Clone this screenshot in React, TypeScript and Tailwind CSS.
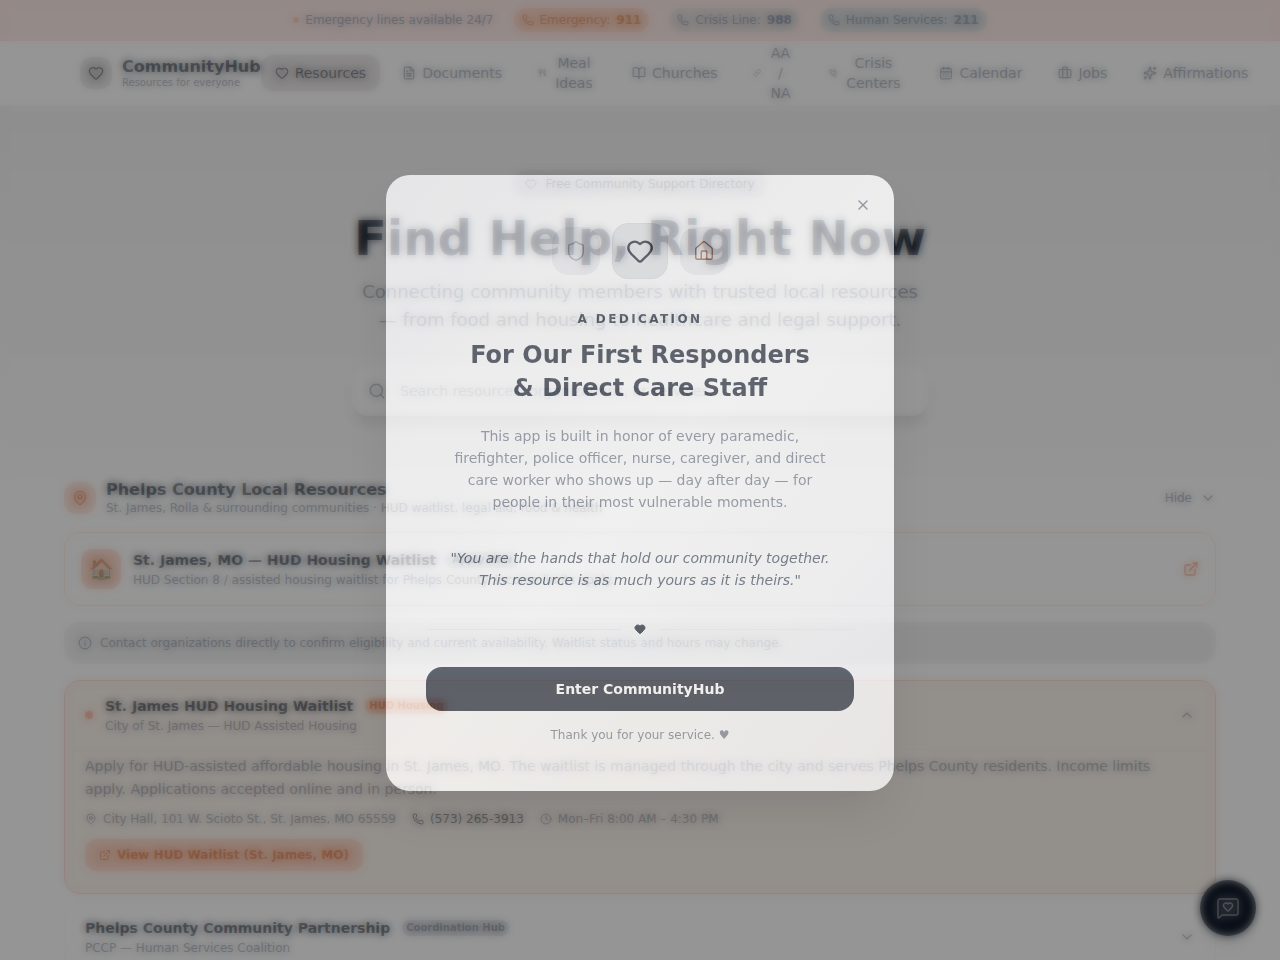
import { useState } from 'react'
import {
  BookOpen, Briefcase, CalendarDays, ChevronDown, ChevronUp, Clock, ExternalLink, FileText, Heart, House,
  Info, Link, MapPin, MessageSquareHeart, Phone, PhoneCall, Search, Shield, Sparkles, Utensils, X,
} from 'lucide-react'

const hotlines = [
  { label: 'Emergency:', number: '911', style: 'bg-[#fbd3c2] text-[#cf7434]' },
  { label: 'Crisis Line:', number: '988', style: 'bg-[#e8e0df] text-slate-500' },
  { label: 'Human Services:', number: '211', style: 'bg-[#dadcde] text-slate-500' },
]

const navItems = [
  { label: 'Resources', icon: Heart, iconStyle: 'w-3.5', active: true },
  { label: 'Documents', icon: FileText, iconStyle: 'w-3.5' },
  { label: 'Meal Ideas', icon: Utensils, iconStyle: 'w-2', labelStyle: 'w-11' },
  { label: 'Churches', icon: BookOpen, iconStyle: 'w-3.5' },
  { label: 'AA / NA', icon: Link, iconStyle: 'w-2', labelStyle: 'w-[26px]' },
  { label: 'Crisis Centers', icon: PhoneCall, iconStyle: 'w-2', labelStyle: 'w-[60px]' },
  { label: 'Calendar', icon: CalendarDays, iconStyle: 'w-3.5' },
  { label: 'Jobs', icon: Briefcase, iconStyle: 'w-3.5' },
  { label: 'Affirmations', icon: Sparkles, iconStyle: 'w-3.5' },
]

function EmergencyBar() {
  return (
    <div className="flex items-center justify-center gap-5 border-b border-[#fbdcd5] bg-[#fdebe8] py-2 text-xs text-slate-500">
      <span className="flex items-center gap-1.5">
        <span className="h-1.5 w-1.5 rounded-full bg-[#f5b196]" />
        Emergency lines available 24/7
      </span>
      {hotlines.map(h => (
        <a key={h.number} href={`tel:${h.number}`} className={`flex items-center gap-1.5 rounded-full px-2 py-1 ${h.style}`}>
          <Phone size={12} />
          <span>{h.label}</span>
          <span className="font-bold">{h.number}</span>
        </a>
      ))}
    </div>
  )
}

function Header() {
  return (
    <header className="border-b border-gray-100 bg-white">
      <div className="mx-auto flex h-16 max-w-6xl items-center px-4">
        <a href="#" className="flex shrink-0 items-center gap-2.5">
          <span className="flex h-8 w-8 items-center justify-center rounded-xl bg-[#e4e1e2]">
            <Heart size={16} className="text-gray-900" />
          </span>
          <span>
            <span className="block text-base leading-5 font-bold text-gray-900">CommunityHub</span>
            <span className="block text-[10px] leading-3 text-gray-500">Resources for everyone</span>
          </span>
        </a>
        <nav className="flex items-center gap-2">
          {navItems.map(item => (
            <a
              key={item.label}
              href="#"
              className={`flex shrink-0 items-center gap-1.5 rounded-xl px-3.5 py-2 text-center text-sm ${item.active ? 'bg-[#e8e4e5] text-gray-900' : 'text-gray-500'}`}
            >
              <item.icon size={14} className={`shrink-0 ${item.iconStyle}`} />
              <span className={item.labelStyle}>{item.label}</span>
            </a>
          ))}
        </nav>
      </div>
    </header>
  )
}

function Hero() {
  return (
    <section className="bg-linear-to-b from-[#f3f3f3] to-[#fdfdfd] px-4 py-16 text-center">
      <span className="inline-flex items-center gap-2 rounded-full bg-[#e4e4e6] px-3 py-1.5 text-xs text-gray-600">
        <Heart size={12} />
        Free Community Support Directory
      </span>
      <h1 className="mt-4 text-5xl leading-12 font-bold text-gray-900">Find Help, Right Now</h1>
      <p className="mx-auto mt-4 max-w-xl text-lg leading-7 text-gray-500">
        Connecting community members with trusted local resources — from food and housing to healthcare and legal support.
      </p>
      <label className="mx-auto mt-8 flex h-[50px] max-w-xl items-center gap-3.5 rounded-2xl bg-white px-4 shadow-lg">
        <Search size={18} className="text-gray-500" />
        <input
          type="text"
          aria-label="Search resources"
          placeholder="Search resources, organizations, or services..."
          className="flex-1 text-sm outline-none placeholder:text-gray-400"
        />
      </label>
    </section>
  )
}

function LocalResources() {
  const [open, setOpen] = useState(true)

  return (
    <section className="mx-auto max-w-6xl">
      <div className="flex items-center gap-2.5">
        <span className="flex h-8 w-8 items-center justify-center rounded-xl bg-[#fbe0d6] text-[#d9692a]">
          <MapPin size={16} />
        </span>
        <div className="flex-1">
          <h2 className="text-base leading-5 font-bold text-gray-900">Phelps County Local Resources</h2>
          <p className="text-xs text-gray-500">St. James, Rolla &amp; surrounding communities · HUD waitlist, legal aid, food &amp; health</p>
        </div>
        <button onClick={() => setOpen(!open)} className="flex items-center gap-2 text-xs text-gray-500">
          Hide <ChevronDown size={16} />
        </button>
      </div>

      <a href="#" className="mt-4 flex items-center gap-3 rounded-2xl border border-[#f7cfc4] bg-white p-4">
        <span className="flex h-10 w-10 items-center justify-center rounded-xl bg-[#fad6c8] text-xl">🏠</span>
        <span className="flex-1">
          <span className="flex items-center gap-2">
            <span className="text-sm font-bold text-gray-900">St. James, MO — HUD Housing Waitlist</span>
            <span className="rounded-full bg-gray-200 px-2 text-[10px] leading-4 font-bold text-gray-500">Apply Now</span>
          </span>
          <span className="mt-0.5 block text-xs text-gray-500">HUD Section 8 / assisted housing waitlist for Phelps County. Income limits apply.</span>
        </span>
        <ExternalLink size={16} className="text-[#e8764a]" />
      </a>

      <div className="mt-4 flex items-center gap-2 rounded-2xl bg-[#f1f1f2] px-3.5 py-[13px] text-xs text-gray-500">
        <Info size={14} />
        Contact organizations directly to confirm eligibility and current availability. Waitlist status and hours may change.
      </div>

      {open && (
        <article className="mt-4 rounded-2xl border border-[#f3b5a3] bg-[#fcf4ed]">
          <div className="flex items-center gap-3 px-5 py-[15px]">
            <span className="h-2 w-2 rounded-full bg-[#f59a80]" />
            <div className="flex-1">
              <div className="flex items-center gap-3">
                <h3 className="text-sm font-bold text-gray-900">St. James HUD Housing Waitlist</h3>
                <span className="rounded-full bg-[#fad0bf] px-1 text-[10px] leading-4 font-bold text-[#d9692a]">HUD Housing</span>
              </div>
              <p className="mt-0.5 text-xs text-gray-500">City of St. James — HUD Assisted Housing</p>
            </div>
            <button aria-label="Collapse" className="text-gray-500"><ChevronUp size={16} /></button>
          </div>
          <div className="border-t border-[#f7eee6] px-5 pt-[5px] pb-[22px]">
            <p className="text-sm leading-[23px] text-gray-500">
              Apply for HUD-assisted affordable housing in St. James, MO. The waitlist is managed through the city and serves Phelps County residents. Income limits apply. Applications accepted online and in person.
            </p>
            <div className="mt-2.5 flex items-center gap-4 text-xs text-gray-500">
              <span className="flex items-center gap-1.5"><MapPin size={12} />City Hall, 101 W. Scioto St., St. James, MO 65559</span>
              <a href="tel:5732653913" className="flex items-center gap-1.5 text-gray-900"><Phone size={12} />(573) 265-3913</a>
              <span className="flex items-center gap-1.5"><Clock size={12} />Mon–Fri 8:00 AM – 4:30 PM</span>
            </div>
            <a href="#" className="mt-3 inline-flex items-center gap-1.5 rounded-xl bg-[#fad3c4] px-3.5 py-2 text-xs font-bold text-[#d9692a]">
              <ExternalLink size={12} />
              View HUD Waitlist (St. James, MO)
            </a>
          </div>
        </article>
      )}

      <article className="mt-2 flex items-center rounded-2xl border border-gray-100 bg-white px-5 py-[15px]">
        <div className="flex-1">
          <div className="flex items-center gap-3">
            <h3 className="text-sm font-bold text-gray-900">Phelps County Community Partnership</h3>
            <span className="rounded-full bg-[#dddde2] px-1 text-[10px] leading-4 font-bold text-gray-500">Coordination Hub</span>
          </div>
          <p className="mt-0.5 text-xs text-gray-500">PCCP — Human Services Coalition</p>
        </div>
        <button aria-label="Expand" className="text-gray-500"><ChevronDown size={16} /></button>
      </article>
    </section>
  )
}

function DedicationModal({ onClose }: { onClose: () => void }) {
  return (
    <div className="fixed inset-0 z-50 flex items-center justify-center bg-black/60 p-4 opacity-70 backdrop-blur-xs">
      <div
        role="dialog"
        aria-labelledby="dedication-title"
        className="relative mt-1.5 w-full max-w-[508px] rounded-3xl bg-linear-to-br from-[#f0f0f3] via-[#fcfcfc] to-[#f0f0f3] px-10 py-12 text-center opacity-88 shadow-2xl"
      >
        <button aria-label="Close" onClick={onClose} className="absolute top-[22px] right-[23px] text-gray-500"><X size={16} /></button>

        <div className="flex items-center justify-center gap-3">
          <span className="flex h-12 w-12 items-center justify-center rounded-2xl border border-gray-200 bg-[#e6e7ea]">
            <Shield size={22} strokeWidth={1.5} className="text-gray-400" />
          </span>
          <span className="flex h-14 w-14 items-center justify-center rounded-2xl border border-gray-300 bg-[#dcdde1]">
            <Heart size={28} className="text-gray-900" />
          </span>
          <span className="flex h-12 w-12 items-center justify-center rounded-2xl border border-gray-200 bg-[#e6e7ea]">
            <House size={22} strokeWidth={1.5} className="text-[#a0603c]" />
          </span>
        </div>

        <p className="mt-8 text-xs font-bold tracking-[0.2em] text-gray-800">A DEDICATION</p>
        <h2 id="dedication-title" className="mt-3 text-2xl leading-[33px] font-bold text-gray-900">
          For Our First Responders
          <br />
          &amp; Direct Care Staff
        </h2>
        <p className="mx-auto mt-5 max-w-[380px] text-sm leading-[22px] text-gray-500">
          This app is built in honor of every paramedic, firefighter, police officer, nurse, caregiver, and direct care worker who shows up — day after day — for people in their most vulnerable moments.
        </p>
        <p className="mt-[34px] text-sm leading-[22px] text-gray-700 italic">
          "You are the hands that hold our community together.
          <br />
          This resource is as much yours as it is theirs."
        </p>
        <div className="mt-8 flex items-center gap-3">
          <span className="h-px flex-1 bg-gray-200/70" />
          <Heart size={12} className="fill-current text-gray-900" />
          <span className="h-px flex-1 bg-gray-200/70" />
        </div>
        <button onClick={onClose} className="mt-8 h-11 w-full rounded-2xl bg-gray-900 text-sm font-bold text-white">
          Enter CommunityHub
        </button>
        <p className="mt-4 text-xs text-gray-500">Thank you for your service. ♥</p>
      </div>
    </div>
  )
}

export default function App() {
  const [showModal, setShowModal] = useState(true)

  return (
    <div className="h-screen overflow-hidden bg-white font-['DejaVu_Sans',sans-serif]">
      <EmergencyBar />
      <Header />
      <Hero />
      <LocalResources />
      <button aria-label="Open chat" className="fixed right-6 bottom-6 flex h-14 w-14 items-center justify-center rounded-full bg-gray-900 text-white shadow-lg">
        <MessageSquareHeart size={24} strokeWidth={1.5} />
      </button>
      {showModal && <DedicationModal onClose={() => setShowModal(false)} />}
    </div>
  )
}
